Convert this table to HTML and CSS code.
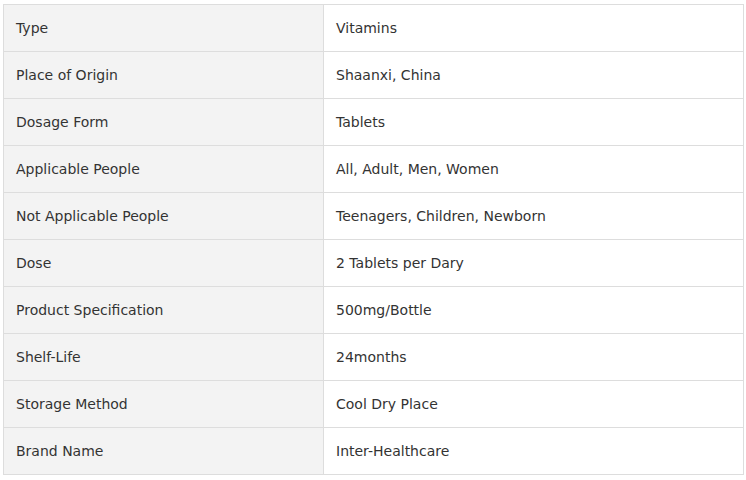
FILE: index.html
```html
<!DOCTYPE html>
<html>
<head>
<meta charset="utf-8">
<link rel="stylesheet" href="styles.css">
</head>
<body>
<table class="spec">
  <tbody>
    <tr><td class="key">Type</td><td class="val">Vitamins</td></tr>
    <tr><td class="key">Place of Origin</td><td class="val">Shaanxi, China</td></tr>
    <tr><td class="key">Dosage Form</td><td class="val">Tablets</td></tr>
    <tr><td class="key">Applicable People</td><td class="val">All, Adult, Men, Women</td></tr>
    <tr><td class="key">Not Applicable People</td><td class="val">Teenagers, Children, Newborn</td></tr>
    <tr><td class="key">Dose</td><td class="val">2 Tablets per Dary</td></tr>
    <tr><td class="key">Product Specification</td><td class="val">500mg/Bottle</td></tr>
    <tr><td class="key">Shelf-Life</td><td class="val">24months</td></tr>
    <tr><td class="key">Storage Method</td><td class="val">Cool Dry Place</td></tr>
    <tr><td class="key">Brand Name</td><td class="val">Inter-Healthcare</td></tr>
  </tbody>
</table>
</body>
</html>
```
FILE: styles.css
```css
html, body {
  margin: 0;
  background: #ffffff;
}
body {
  padding: 4px 2px 0 3px;
  font-family: "DejaVu Sans", Verdana, sans-serif;
  font-size: 14px;
  color: #333333;
}
.spec {
  border-collapse: collapse;
  width: 741px;
  table-layout: fixed;
}
.spec td {
  border: 1px solid #dddddd;
  padding: 0 12px;
  vertical-align: middle;
  box-sizing: border-box;
  height: 47px;
}
.spec .key {
  width: 320px;
  background: #f3f3f3;
}
.spec .val {
  background: #ffffff;
}
```
